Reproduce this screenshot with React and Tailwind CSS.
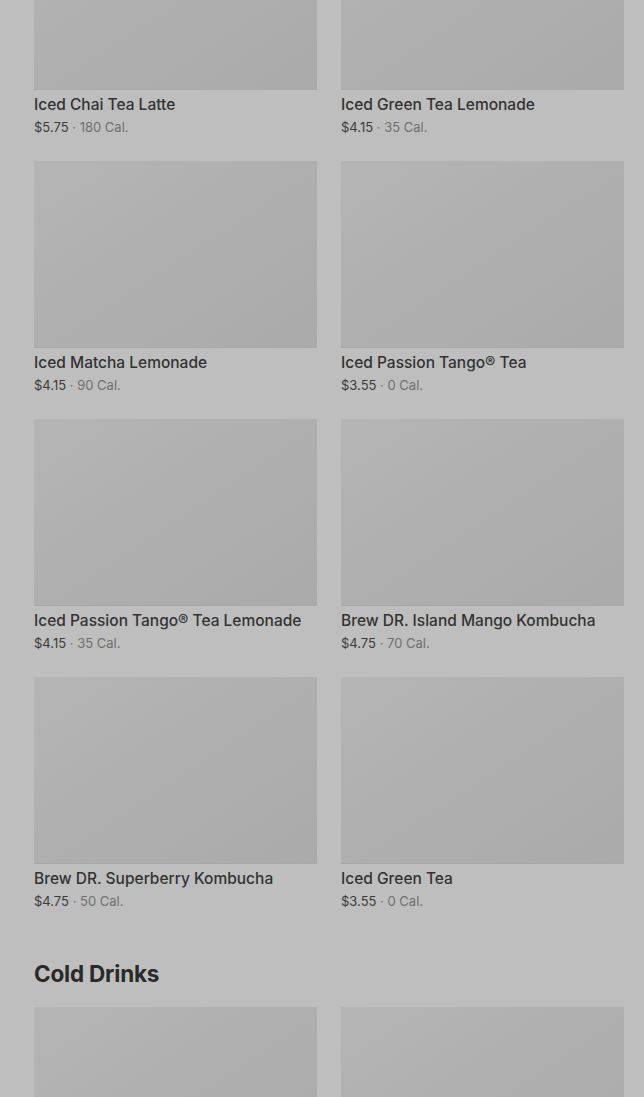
const TEAS = [
  { name: "Iced Chai Tea Latte", price: "$5.75", cal: "180 Cal." },
  { name: "Iced Green Tea Lemonade", price: "$4.15", cal: "35 Cal." },
  { name: "Iced Matcha Lemonade", price: "$4.15", cal: "90 Cal." },
  { name: "Iced Passion Tango® Tea", price: "$3.55", cal: "0 Cal." },
  { name: "Iced Passion Tango® Tea Lemonade", price: "$4.15", cal: "35 Cal." },
  { name: "Brew DR. Island Mango Kombucha", price: "$4.75", cal: "70 Cal." },
  { name: "Brew DR. Superberry Kombucha", price: "$4.75", cal: "50 Cal." },
  { name: "Iced Green Tea", price: "$3.55", cal: "0 Cal." },
];

function ItemCard({ item }) {
  return (
    <div className="flex flex-col">
      <div className="h-[187px] bg-gradient-to-br from-[#b5b5b5] via-[#afafaf] to-[#aaaaaa] border-b border-[#a8a8a8]" />
      {item && (
        <>
          <p className="mt-[5px] h-5 text-[15.5px] leading-5 font-medium text-[#333333] whitespace-nowrap">
            {item.name}
          </p>
          <p className="mt-[3px] h-[18px] text-[13px] leading-[18px] text-[#3c3c3c]">
            {item.price}
            <span className="text-[#707070]"> · {item.cal}</span>
          </p>
        </>
      )}
    </div>
  );
}

export default function App() {
  return (
    <div
      className="h-[1097px] overflow-hidden bg-[#bebebe]"
      style={{ fontFamily: "Inter, 'Noto Sans', sans-serif" }}
    >
      <div className="-mt-[97px] pl-[34px] pr-[20px]">
        {/* Teas */}
        <div className="grid grid-cols-2 gap-x-6 gap-y-[25px]">
          {TEAS.map((t) => (
            <ItemCard key={t.name} item={t} />
          ))}
        </div>

        {/* Cold Drinks */}
        <h2 className="mt-[49px] mb-[18px] h-[30px] text-[22.5px] leading-[30px] font-bold text-[#2a2a2a] tracking-[-0.2px]">
          Cold Drinks
        </h2>
        <div className="grid grid-cols-2 gap-x-6">
          <ItemCard />
          <ItemCard />
        </div>
      </div>
    </div>
  );
}
